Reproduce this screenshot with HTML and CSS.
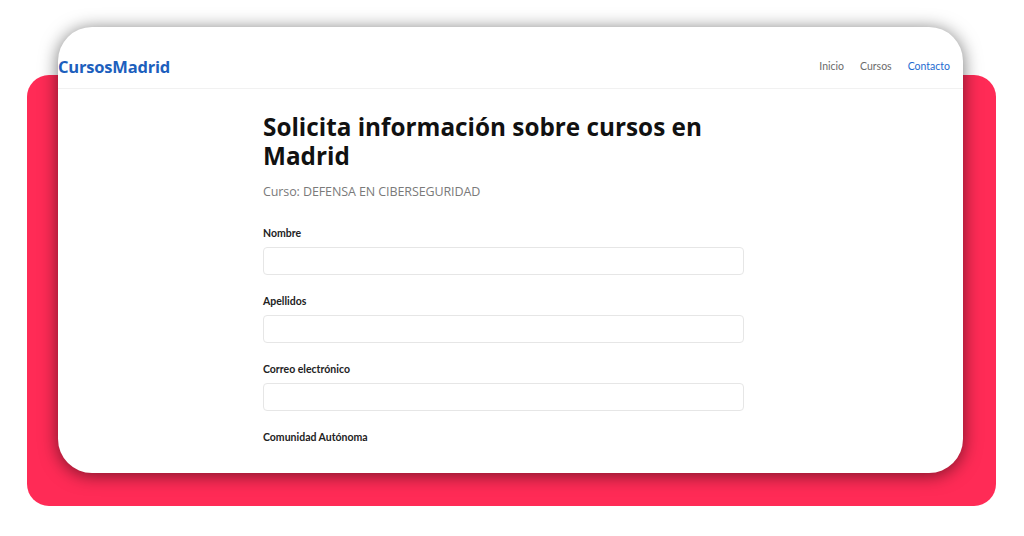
FILE: index.html
```html
<!DOCTYPE html>
<html lang="es">
<head>
    <meta charset="UTF-8">
    <meta name="viewport" content="width=device-width, initial-scale=1.0">
    <title>CursosMadrid - Solicita información</title>
    <link rel="stylesheet" href="styles.css">
</head>
<body>
    <div class="stage">
        <div class="backdrop"></div>
        <div class="browser-card">
            <header class="site-header">
                <a class="logo" href="#">CursosMadrid</a>
                <nav class="nav">
                    <a href="#">Inicio</a>
                    <a href="#">Cursos</a>
                    <a href="#" class="active">Contacto</a>
                </nav>
            </header>
            <main class="form-wrap">
                <h1 class="form-title">Solicita información sobre cursos en Madrid</h1>
                <p class="course-name">Curso: DEFENSA EN CIBERSEGURIDAD</p>
                <form class="info-form">
                    <div class="field">
                        <label for="nombre">Nombre</label>
                        <input type="text" id="nombre">
                    </div>
                    <div class="field">
                        <label for="apellidos">Apellidos</label>
                        <input type="text" id="apellidos">
                    </div>
                    <div class="field">
                        <label for="email">Correo electrónico</label>
                        <input type="email" id="email">
                    </div>
                    <div class="field">
                        <label for="comunidad">Comunidad Autónoma</label>
                    </div>
                </form>
            </main>
        </div>
    </div>
</body>
</html>
```

FILE: styles.css
```css
html, body {
    margin: 0;
    padding: 0;
    background: #fff;
}
body {
    font-family: 'Open Sans', 'Noto Sans', sans-serif;
    width: 1024px;
    height: 536px;
    overflow: hidden;
}
.stage {
    position: relative;
    width: 1024px;
    height: 536px;
    padding: 27px 0 0 58px;
    box-sizing: border-box;
}
.backdrop {
    position: absolute;
    left: 27px;
    top: 75px;
    width: 969px;
    height: 431px;
    background: #ff2b56;
    border-radius: 22px;
}
.browser-card {
    position: relative;
    width: 905px;
    height: 446px;
    background: #fff;
    border-radius: 34px;
    box-shadow: 0 2px 18px rgba(0,0,0,0.55);
    overflow: hidden;
}
.site-header {
    height: 62px;
    display: flex;
    align-items: center;
    justify-content: space-between;
    padding: 0 13px 0 0;
    border-bottom: 1px solid #f1f1f1;
    box-sizing: border-box;
}
.logo {
    font-size: 16.5px;
    font-weight: bold;
    color: #1d5fbd;
    text-decoration: none;
    letter-spacing: -0.2px;
    margin-top: 18px;
}
.nav {
    display: flex;
    gap: 16px;
    margin-top: 16px;
}
.nav a {
    font-family: 'Lato', sans-serif;
    font-size: 10.5px;
    color: #6b6b6b;
    text-decoration: none;
}
.nav a.active {
    color: #1e6bd0;
}
.form-wrap {
    width: 481px;
    margin-left: 205px;
    padding-top: 23px;
}
.form-title {
    margin: 0;
    font-size: 24.3px;
    line-height: 29px;
    font-weight: bold;
    color: #111;
    letter-spacing: 0;
}
.course-name {
    margin: 13px 0 0;
    font-size: 12.5px;
    color: #7a7a7a;
    letter-spacing: -0.1px;
}
.info-form {
    margin-top: 27px;
}
.field {
    margin-bottom: 20px;
}
.field label {
    display: block;
    font-family: 'Lato', sans-serif;
    font-size: 10.5px;
    font-weight: bold;
    color: #222;
    margin-bottom: 8px;
}
.field input {
    display: block;
    width: 100%;
    height: 28px;
    box-sizing: border-box;
    border: 1px solid #e6e6e6;
    border-radius: 4px;
    outline: none;
}
```
